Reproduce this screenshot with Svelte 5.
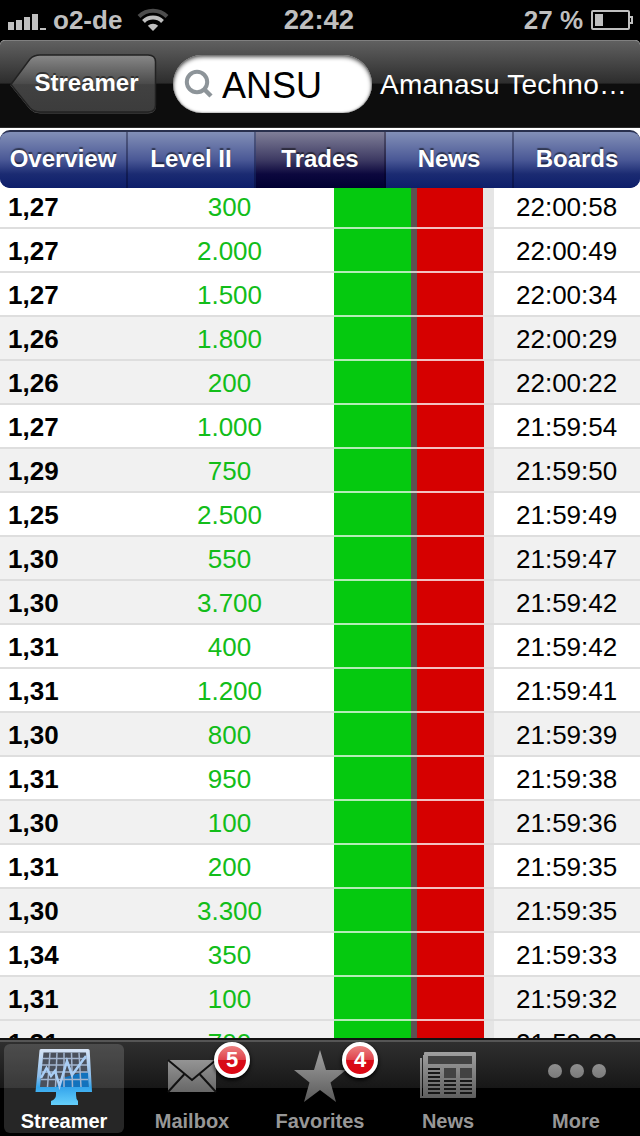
<script lang="ts">
  type Trade = {
    price: string;
    size: string;
    time: string;
    shaded: boolean;
    sell: number;
  };

  const segments = ['Overview', 'Level II', 'Trades', 'News', 'Boards'];
  let activeSegment = $state('Trades');
  let activeTab = $state('Streamer');
  let symbol = $state('ANSU');

  const tabs = [
    { label: 'Streamer', badge: 0 },
    { label: 'Mailbox', badge: 5 },
    { label: 'Favorites', badge: 4 },
    { label: 'News', badge: 0 },
    { label: 'More', badge: 0 }
  ];

  // sell is the width of the red part of the bar
  const trades: Trade[] = [
    { price: '1,27', size: '300', time: '22:00:58', shaded: false, sell: 66 },
    { price: '1,27', size: '2.000', time: '22:00:49', shaded: false, sell: 66 },
    { price: '1,27', size: '1.500', time: '22:00:34', shaded: false, sell: 66 },
    { price: '1,26', size: '1.800', time: '22:00:29', shaded: true, sell: 66 },
    { price: '1,26', size: '200', time: '22:00:22', shaded: true, sell: 67 },
    { price: '1,27', size: '1.000', time: '21:59:54', shaded: false, sell: 67 },
    { price: '1,29', size: '750', time: '21:59:50', shaded: true, sell: 67 },
    { price: '1,25', size: '2.500', time: '21:59:49', shaded: false, sell: 67 },
    { price: '1,30', size: '550', time: '21:59:47', shaded: true, sell: 67 },
    { price: '1,30', size: '3.700', time: '21:59:42', shaded: true, sell: 67 },
    { price: '1,31', size: '400', time: '21:59:42', shaded: false, sell: 67 },
    { price: '1,31', size: '1.200', time: '21:59:41', shaded: false, sell: 67 },
    { price: '1,30', size: '800', time: '21:59:39', shaded: true, sell: 67 },
    { price: '1,31', size: '950', time: '21:59:38', shaded: false, sell: 67 },
    { price: '1,30', size: '100', time: '21:59:36', shaded: true, sell: 67 },
    { price: '1,31', size: '200', time: '21:59:35', shaded: false, sell: 67 },
    { price: '1,30', size: '3.300', time: '21:59:35', shaded: true, sell: 67 },
    { price: '1,34', size: '350', time: '21:59:33', shaded: false, sell: 67 },
    { price: '1,31', size: '100', time: '21:59:32', shaded: true, sell: 67 },
    { price: '1,31', size: '700', time: '21:59:32', shaded: true, sell: 67 }
  ];
</script>

<div class="screen">
  <div class="status-bar">
    <div class="carrier">
      <svg class="signal" width="38" height="18" viewBox="0 0 38 18" fill="#bfbfbf">
        <rect x="0" y="9" width="6" height="8" />
        <rect x="8" y="7" width="6" height="10" />
        <rect x="16" y="4" width="6" height="13" />
        <rect x="24" y="1" width="6" height="16" />
        <rect x="32" y="15" width="6" height="2" />
      </svg>
      <span class="carrier-name">o2-de</span>
      <svg class="wifi" width="32" height="24" viewBox="0 0 32 24" fill="none">
        <path d="M2 8.500 A20 20 0 0 1 30 8.500" stroke="#4c4c4c" stroke-width="4" />
        <path d="M6.500 13.500 A13.500 13.500 0 0 1 25.500 13.500" stroke="#bfbfbf" stroke-width="4" />
        <path d="M16 23 L10.800 17.800 A7.500 7.500 0 0 1 21.200 17.800 Z" fill="#bfbfbf" />
      </svg>
    </div>
    <span class="clock">22:42</span>
    <div class="power">
      <span>27 %</span>
      <svg width="43" height="20" viewBox="0 0 43 20">
        <rect x="1" y="1" width="37" height="18" rx="1" fill="none" stroke="#bfbfbf" stroke-width="2" />
        <path d="M38 7 H41 V13 H38" fill="none" stroke="#bfbfbf" stroke-width="2" />
        <rect x="4" y="4" width="8" height="12" fill="#bfbfbf" />
      </svg>
    </div>
  </div>

  <header class="nav-bar">
    <button class="back">
      <svg width="147" height="60" viewBox="0 0 147 60">
        <defs>
          <linearGradient id="back-fill" x1="0" y1="0" x2="0" y2="1">
            <stop offset="0" stop-color="#888" />
            <stop offset="0.5" stop-color="#4b4b4b" />
            <stop offset="0.52" stop-color="#414141" />
            <stop offset="1" stop-color="#3c3c3c" />
          </linearGradient>
        </defs>
        <path d="M1 31.500 L20 6 Q24 2 30 2 H138 Q145.500 2 145.500 9 V52 Q145.500 59 138 59 H30 Q24 59 20 55 Z" fill="none" stroke="#555" />
        <path d="M1 30.500 L20 5 Q24 1 30 1 H138 Q145.500 1 145.500 8 V51 Q145.500 58 138 58 H30 Q24 58 20 54 Z" fill="url(#back-fill)" stroke="#222" stroke-width="1.500" />
      </svg>
      <span>Streamer</span>
    </button>
    <label class="search">
      <svg width="30" height="30" viewBox="0 0 30 30" fill="none" stroke="#8d9499">
        <circle cx="13" cy="13" r="10.200" stroke-width="4" />
        <path d="M19.500 19.500 L27 27" stroke-width="4.500" />
      </svg>
      <input bind:value={symbol} aria-label="Symbol" />
    </label>
    <h1>Amanasu Techno…</h1>
  </header>

  <div class="segments">
    {#each segments as segment}
      <button class:active={segment === activeSegment} onclick={() => (activeSegment = segment)}>
        {segment}
      </button>
    {/each}
  </div>

  <main class="trades">
    {#each trades as trade}
      <div class="row" class:shaded={trade.shaded}>
        <span class="price">{trade.price}</span>
        <span class="size">{trade.size}</span>
        <div class="bar">
          <div class="buy"></div>
          <div class="mid"></div>
          <div class="sell" style="width: {trade.sell}px"></div>
        </div>
        <span class="time">{trade.time}</span>
      </div>
    {/each}
  </main>

  <nav class="tab-bar">
    {#each tabs as tab}
      <button class="tab" class:active={tab.label === activeTab} onclick={() => (activeTab = tab.label)}>
        <svg class="icon" width="64" height="64" viewBox="0 0 64 64">
          <defs>
            <linearGradient id="grey" gradientUnits="userSpaceOnUse" x1="0" y1="6" x2="0" y2="56">
              <stop offset="0" stop-color="#a2a2a2" />
              <stop offset="1" stop-color="#5c5c5c" />
            </linearGradient>
            <linearGradient id="screen-blue" gradientUnits="userSpaceOnUse" x1="0" y1="4" x2="0" y2="60">
              <stop offset="0" stop-color="#dbe6f7" />
              <stop offset="0.5" stop-color="#8dbdea" />
              <stop offset="0.7" stop-color="#35a5ec" />
              <stop offset="1" stop-color="#62cdfa" />
            </linearGradient>
          </defs>
          {#if tab.label === 'Streamer'}
            <path d="M9 5 H56 Q57.500 5 57.700 6.500 L60 48 H44 V51 Q44 55 46 57 V61 H19 V57 Q24 55 24 51 V48 H3.500 L7.500 6.500 Q7.500 5 9 5 Z" fill="url(#screen-blue)" />
            <path d="M11.500 8.500 H54 L56.500 43 H8 Z" fill="#4a505c" />
            <path d="M24 43 L30 34 L56 27 L56.500 43 Z" fill="#1272bd" />
            <path d="M18 8.500 L15.500 43 M25 8.500 L23.500 43 M32 8.500 V43 M39.500 8.500 L40.500 43 M47 8.500 L49 43 M11 14.500 H55 M10 21 H55 M9.500 28 H56 M9 35.500 H56" stroke="#a3b5cf" stroke-width="1.500" fill="none" />
            <path d="M9 34 L14.500 24 L19 32 L23 27 L27.500 42 L35 17 L40 31 L54 12" stroke="#a9cdf4" stroke-width="2.500" fill="none" />
          {:else if tab.label === 'Mailbox'}
            <rect x="8" y="16" width="48" height="32" fill="url(#grey)" />
            <path d="M8 16 L32 36 L56 16 M8 48 L24.500 30 M56 48 L39.500 30" stroke="#111" stroke-width="2" fill="none" />
          {:else if tab.label === 'Favorites'}
            <path d="M32 6 L38 26 H58 L42.500 38.500 L48 58 L32 46 L16 58 L21.500 38.500 L6 26 H26 Z" fill="url(#grey)" />
          {:else if tab.label === 'News'}
            <path d="M4 14 H6 V52 H8 V54 H4 Z M7 11 H9 V54 H7 Z" fill="url(#grey)" />
            <rect x="8" y="8" width="52" height="46" rx="1" fill="url(#grey)" />
            <path d="M12 12 H56 V20 H12 Z M28 24 H40 V34 H28 Z M44 24 H56 V34 H44 Z" fill="#424242" />
            <path d="M12 25 H24 M12 29 H24 M12 33 H24 M12 37 H24 M12 41 H24 M12 45 H24 M12 49 H24 M28 37 H40 M28 41 H40 M28 45 H40 M28 49 H40 M44 37 H56 M44 41 H56 M44 45 H56 M44 49 H56" stroke="#171717" stroke-width="2" />
          {:else}
            <circle cx="11" cy="27" r="7" fill="url(#grey)" />
            <circle cx="33" cy="27" r="7" fill="url(#grey)" />
            <circle cx="55" cy="27" r="7" fill="url(#grey)" />
          {/if}
        </svg>
        <span class="tab-label">{tab.label}</span>
        {#if tab.badge}
          <span class="badge">{tab.badge}</span>
        {/if}
      </button>
    {/each}
  </nav>
</div>

<style>
  :global(body) {
    background: #000;
  }

  .screen {
    display: flex;
    flex-direction: column;
    width: 640px;
    height: 1136px;
    overflow: hidden;
    background: #fff;
    font-family: 'Liberation Sans', Arial, sans-serif;
  }

  button {
    margin: 0;
    padding: 0;
    border: 0;
    background: none;
    font: inherit;
    color: inherit;
  }

  .status-bar {
    display: grid;
    grid-template-columns: 1fr auto 1fr;
    align-items: center;
    flex: none;
    height: 40px;
    padding: 0 6px 0 8px;
    box-sizing: border-box;
    background: #000;
    color: #bfbfbf;
    font-size: 26px;
    font-weight: bold;
  }

  .clock {
    padding-right: 4px;
    font-size: 27.5px;
  }

  .carrier,
  .power {
    display: flex;
    align-items: center;
  }

  .signal {
    margin-top: 3px;
  }

  .carrier-name {
    margin-left: 7px;
  }

  .wifi {
    margin-left: 15px;
  }

  .power {
    justify-content: flex-end;
    gap: 8px;
  }

  .nav-bar {
    display: flex;
    align-items: center;
    flex: none;
    height: 88px;
    padding: 0 0 0 10px;
    box-sizing: border-box;
    background: linear-gradient(#606060, #2d2d2d 49%, #0d0d0d 50%, #0d0d0d);
    border-top: 1px solid #808080;
    border-bottom: 1px solid #2a2a2a;
    border-radius: 5px 5px 0 0;
    box-shadow: 0 -6px 0 #000;
  }

  .back {
    display: grid;
    width: 147px;
    height: 60px;
    color: #fff;
    font-size: 24px;
    font-weight: bold;
    text-shadow: 0 -2px 0 #333;
  }

  .back svg,
  .back span {
    grid-area: 1 / 1;
  }

  .back span {
    align-self: center;
    padding: 0 0 2px 6px;
  }

  .search {
    display: flex;
    align-items: center;
    width: 199px;
    height: 58px;
    margin-left: 16px;
    padding-left: 11px;
    box-sizing: border-box;
    border-radius: 29px;
    background: #fff;
    box-shadow: inset 0 2px 4px #555, inset 0 0 2px #777;
  }

  .search input {
    width: 130px;
    margin-left: 8px;
    padding: 4px 0 0;
    border: 0;
    outline: 0;
    background: none;
    font: 36px 'Liberation Sans', Arial, sans-serif;
    color: #000;
  }

  .nav-bar h1 {
    margin: 2px 0 0 8px;
    white-space: nowrap;
    color: #fff;
    font-size: 28px;
    font-weight: normal;
    letter-spacing: 0.22px;
  }

  .segments {
    display: grid;
    grid-template-columns: 128px 128px 130px 128px 126px;
    flex: none;
    height: 58px;
    margin-top: 2px;
    overflow: hidden;
    border-radius: 10px;
    box-sizing: border-box;
    border-top: 2px solid #29304d;
    background: #0e1d68;
  }

  .segments button {
    padding-bottom: 2px;
    border-right: 2px solid rgba(0, 0, 30, 0.35);
    background: linear-gradient(#8390b7, #4a5896 50%, #1b2b72 75%, #0d1e6a) border-box;
    color: #fff;
    font-size: 24px;
    font-weight: bold;
    text-shadow: 0 -2px 1px rgba(0, 0, 0, 0.5);
  }

  .segments button:last-child {
    border-right: 0;
  }

  .segments button.active {
    background: linear-gradient(#807f98, #3d3a63 50%, #0c083e 75%, #000032) border-box;
  }

  .trades {
    display: flex;
    flex-direction: column;
    flex: 1;
    min-height: 0;
    overflow: hidden;
  }

  .row {
    display: grid;
    grid-template-columns: 126px 208px 160px 146px;
    flex: none;
    height: 44px;
    box-sizing: border-box;
    border-bottom: 2px solid #dedede;
    background: #fff;
    font-size: 26px;
    line-height: 44px;
  }

  .row.shaded {
    background: #f1f1f1;
  }

  /* list is scrolled slightly under the segments */
  .row:first-child {
    height: 41px;
    line-height: 39px;
  }

  .price {
    padding-left: 8px;
    font-weight: bold;
  }

  .size {
    height: 42px;
    padding-right: 1px;
    color: #12bd19;
    text-align: center;
  }

  .price,
  .time {
    height: 42px;
  }

  .row:first-child span {
    height: 39px;
  }

  .bar {
    display: flex;
    height: 100%;
    background: #e5e5e5;
  }

  .buy {
    width: 77px;
    background: #05c90f;
    box-shadow: 0 2px 0 #b4ecb7;
  }

  .mid {
    width: 6px;
    background: #5c5152;
    box-shadow: 0 2px 0 #cfcacb;
  }

  .sell {
    background: #d60000;
    box-shadow: 0 2px 0 #f3c0c0;
  }

  .time {
    padding-left: 22px;
  }

  .tab-bar {
    display: grid;
    grid-template-columns: repeat(5, 120px);
    column-gap: 8px;
    flex: none;
    height: 98px;
    padding: 4px 4px 4px;
    box-sizing: border-box;
    border-top: 2px solid #111;
    background: linear-gradient(#555 0 2px, #2f2f2f 2px, #171717 48px, #000 48px);
  }

  .tab {
    display: flex;
    flex-direction: column;
    align-items: center;
    position: relative;
    border-radius: 6px;
    color: #979797;
    font-size: 20px;
    font-weight: bold;
  }

  .tab.active {
    background: rgba(255, 255, 255, 0.15);
    color: #fff;
  }

  .icon {
    flex: none;
  }

  .tab-label {
    margin-top: 2px;
    line-height: 23px;
  }

  .badge {
    position: absolute;
    top: -2px;
    right: 2px;
    width: 28px;
    height: 28px;
    border: 4px solid #fff;
    border-radius: 50%;
    background: linear-gradient(#ec8080, #df424b 50%, #d70b18 51%, #dc0714);
    box-shadow: 0 2px 4px #000;
    color: #fff;
    font-size: 22px;
    line-height: 28px;
    text-align: center;
  }
</style>
